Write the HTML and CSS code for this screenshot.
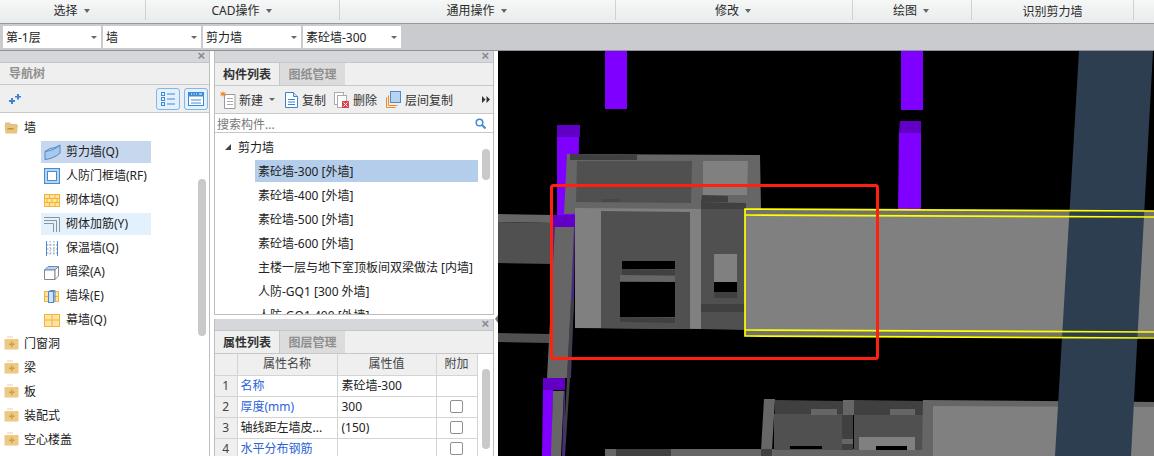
FILE: index.html
```html
<!DOCTYPE html>
<html lang="zh-CN">
<head>
<meta charset="utf-8">
<title>CAD</title>
<link rel="stylesheet" href="styles.css">
</head>
<body>
<svg class="defs" width="0" height="0" aria-hidden="true">
  <symbol id="folder" viewBox="0 0 15 14">
    <path d="M3 0.5h6v1H3z" fill="#e6cfa0"/>
    <path d="M0.5 3h14v10.500h-14z" fill="#edc983"/>
    <path d="M7 5.500h1.500V7.500h2v1.500h-2v2H7V9H5V7.500h2z" fill="#cf9f45"/>
  </symbol>
</svg>

<header class="menubar">
  <div class="menu m1">选择<i class="caret"></i></div>
  <div class="menu m2">CAD操作<i class="caret"></i></div>
  <div class="menu m3">通用操作<i class="caret"></i></div>
  <div class="menu m4">修改<i class="caret"></i></div>
  <div class="menu m5">绘图<i class="caret"></i></div>
  <div class="menu m6 low">识别剪力墙</div>
</header>

<div class="selectbar">
  <div class="select"><span>第-1层</span><i class="caret small"></i></div>
  <div class="select"><span>墙</span><i class="caret small"></i></div>
  <div class="select"><span>剪力墙</span><i class="caret small"></i></div>
  <div class="select"><span>素砼墙-300</span><i class="caret small"></i></div>
</div>

<main class="main">
  <aside class="nav">
    <div class="closebar"><span class="x">×</span></div>
    <div class="navtitle">导航树</div>
    <div class="navtools">
      <svg class="sparkle" width="14" height="12" viewBox="0 0 14 12"><path d="M3 5h2v2h2v2H5v2H3V9H1V7h2zM9 1h2v2h2v1.500h-2v2H9v-2H7V3h2z" fill="#3f83cc"/></svg>
      <span class="spacer"></span>
      <button class="toggle"><svg width="14" height="14" viewBox="0 0 14 14"><g fill="none" stroke="#3f8ad6"><rect x="0.500" y="0.500" width="3" height="3"/><rect x="0.500" y="5.500" width="3" height="3"/><rect x="0.500" y="10.500" width="3" height="3"/><path d="M6 2h8M6 7h8M6 12h8"/></g></svg></button>
      <button class="toggle"><svg width="16" height="14" viewBox="0 0 16 14"><rect x="0.500" y="0.500" width="15" height="13" fill="#fff" stroke="#3f8ad6"/><rect x="0.500" y="0.500" width="15" height="4" fill="#3f8ad6"/><path d="M3 8h10M3 11h10" stroke="#3f8ad6"/><path d="M3 2h1M5.500 2h1M8 2h1M11 2h3" stroke="#fff"/></svg></button>
    </div>
    <div class="tree">
      <div class="group first"><svg class="gicon" width="15" height="13" viewBox="0 0 15 13"><path d="M1 1.500h5l1 1.500h6v2H1z" fill="#d9c499"/><path d="M0.500 4h13.500l-1 8.500H1.500z" fill="#e8c47c"/><path d="M3.500 7h6v1.500h-6z" fill="#bd9442"/></svg>墙</div>
      <div class="leaf sel"><svg width="17" height="16" viewBox="0 0 17 16"><path d="M1 7.500C6 7 12 5 16 1v8C12 13 6 15 1 15.500z" fill="#a9c9ec" stroke="#4a8ad0"/><path d="M1 7.500L6 4.500C10 4 13 3 16 1" fill="none" stroke="#4a8ad0"/></svg><span>剪力墙(Q)</span></div>
      <div class="leaf"><svg width="16" height="16" viewBox="0 0 16 16"><rect x="0.500" y="0.500" width="15" height="15" fill="#b7d3f0" stroke="#4a8ad0"/><rect x="3.500" y="3.500" width="9" height="9" fill="#fff" stroke="#4a8ad0"/></svg><span>人防门框墙(RF)</span></div>
      <div class="leaf"><svg width="16" height="13" viewBox="0 0 16 13"><rect x="0.500" y="0.500" width="15" height="12" fill="#fde3a7" stroke="#f5b52e"/><path d="M0 4.500h16M0 8.500h16M5.500 0v4.500M11 0v4.500M3 4.500v4M8 4.500v4M13 4.500v4M5.500 8.500V13M11 8.500V13" stroke="#f5b52e" fill="none"/></svg><span>砌体墙(Q)</span></div>
      <div class="leaf hov"><svg width="16" height="15" viewBox="0 0 16 15"><path d="M0 .5h15.500V15M0 3.500h12.500V15M0 6.500h9.500V15" fill="none" stroke="#8a949c"/></svg><span>砌体加筋(Y)</span></div>
      <div class="leaf"><svg width="16" height="15" viewBox="0 0 16 15"><path d="M2.500 0v15M13.500 0v15" stroke="#4a8ad0" fill="none"/><path d="M6 0v15M10 0v15M3 4h10M3 8h10M3 12h10" stroke="#8aa0b8" stroke-dasharray="1.500 1.500" fill="none"/></svg><span>保温墙(Q)</span></div>
      <div class="leaf"><svg width="15" height="15" viewBox="0 0 15 15"><path d="M0.500 5L4 1.500h10.500L11 5z" fill="#b7d3f0" stroke="#5a90c8"/><path d="M0.500 5H11v9.500H0.500z" fill="#fff" stroke="#888"/><path d="M11 5l3.500-3.500V11L11 14.500z" fill="#fff" stroke="#888"/></svg><span>暗梁(A)</span></div>
      <div class="leaf"><svg width="15" height="13" viewBox="0 0 15 13"><rect x="0.500" y="1.500" width="14" height="10" fill="#fde3a7" stroke="#f5b52e"/><path d="M0 6.500h15" stroke="#f5b52e"/><rect x="4.500" y="1.500" width="5" height="11" fill="#cfe2f6" stroke="#4a8ad0"/><path d="M4.500 1.500L6.500 .5h4.500v10l-1.500 2" fill="none" stroke="#4a8ad0"/></svg><span>墙垛(E)</span></div>
      <div class="leaf last"><svg width="16" height="13" viewBox="0 0 16 13"><rect x="0.500" y="0.500" width="15" height="12" fill="#fde3a7" stroke="#f5b52e"/><path d="M0 6h16M8 0v13" stroke="#f5b52e" fill="none"/></svg><span>幕墙(Q)</span></div>
      <div class="group"><svg class="gicon" width="15" height="14"><use href="#folder"/></svg>门窗洞</div>
      <div class="group"><svg class="gicon" width="15" height="14"><use href="#folder"/></svg>梁</div>
      <div class="group"><svg class="gicon" width="15" height="14"><use href="#folder"/></svg>板</div>
      <div class="group"><svg class="gicon" width="15" height="14"><use href="#folder"/></svg>装配式</div>
      <div class="group"><svg class="gicon" width="15" height="14"><use href="#folder"/></svg>空心楼盖</div>
      <div class="thumb tree-thumb"></div>
    </div>
  </aside>

  <section class="middle">
    <div class="panel list-panel">
      <div class="closebar"><span class="x">×</span></div>
      <div class="tabs"><div class="tab on">构件列表</div><div class="tab">图纸管理</div></div>
      <div class="tools">
        <svg class="t-new" width="16" height="18" viewBox="0 0 16 18"><path d="M4.500 3.500h10.500v14H4.500z" fill="#fff" stroke="#9a9a9a"/><path d="M7 7.500h6M7 10.500h6M7 13.500h6" stroke="#aaa"/><path d="M3 0l.8 2L6 1 4.800 3 6 5 3.800 4 3 6 2.200 4 0 5l1.200-2L0 1l2.200 1z" fill="#f08a24"/></svg>
        <span class="tl w-new">新建</span><i class="caret small tl-caret"></i>
        <svg class="t-copy" width="13" height="16" viewBox="0 0 13 16"><path d="M.5 .5h8l4 4v11H.5z" fill="#fff" stroke="#3f83cc"/><path d="M8.500 .5v4h4" fill="#cfe2f6" stroke="#3f83cc"/><path d="M3 7.500h7M3 10h7M3 12.500h7" stroke="#3f83cc"/></svg>
        <span class="tl w-copy">复制</span>
        <svg class="t-del" width="15" height="16" viewBox="0 0 15 16"><rect x="0.500" y="0.500" width="9" height="12" fill="#fff" stroke="#aaa"/><rect x="3.500" y="3.500" width="9" height="12" fill="#fff" stroke="#aaa"/><rect x="8" y="9" width="7" height="7" fill="#d9444a"/><path d="M9.500 10.500l4 4M13.500 10.500l-4 4" stroke="#fff"/></svg>
        <span class="tl w-del">删除</span>
        <svg class="t-floor" width="15" height="17" viewBox="0 0 15 17"><path d="M.5 6.500v10h9M2.500 4.500v10h9" fill="none" stroke="#f08a24"/><rect x="4.500" y="0.500" width="10" height="11" fill="#b7d3f0" stroke="#4a8ad0"/></svg>
        <span class="tl w-floor">层间复制</span>
        <svg class="more" width="8" height="7" viewBox="0 0 8 7"><path d="M0 0l3.500 3.500L0 7zM4.500 0L8 3.500 4.500 7z" fill="#333"/></svg>
      </div>
      <div class="search"><span>搜索构件...</span><svg width="11" height="11" viewBox="0 0 11 11"><circle cx="4.500" cy="4.500" r="3.300" fill="none" stroke="#3f8ad6" stroke-width="1.500"/><path d="M7 7l3.500 3.500" stroke="#3f8ad6" stroke-width="2"/></svg></div>
      <div class="list">
        <div class="root"><i class="tri"></i><span>剪力墙</span></div>
        <div class="row on">素砼墙-300 [外墙]</div>
        <div class="row">素砼墙-400 [外墙]</div>
        <div class="row">素砼墙-500 [外墙]</div>
        <div class="row">素砼墙-600 [外墙]</div>
        <div class="row">主楼一层与地下室顶板间双梁做法 [内墙]</div>
        <div class="row">人防-GQ1 [300 外墙]</div>
        <div class="row">人防-GQ1 400 [外墙]</div>
        <div class="thumb list-thumb"></div>
      </div>
    </div>
    <div class="panel prop-panel">
      <div class="closebar"><span class="x">×</span></div>
      <div class="tabs"><div class="tab on">属性列表</div><div class="tab">图层管理</div></div>
      <div class="tablewrap">
        <table class="props">
          <colgroup><col class="c1"><col class="c2"><col class="c3"><col class="c4"></colgroup>
          <thead><tr><th></th><th>属性名称</th><th>属性值</th><th>附加</th></tr></thead>
          <tbody>
            <tr><th>1</th><td class="blue">名称</td><td>素砼墙-300</td><td></td></tr>
            <tr><th>2</th><td class="blue">厚度(mm)</td><td>300</td><td><i class="check"></i></td></tr>
            <tr><th>3</th><td>轴线距左墙皮...</td><td>(150)</td><td><i class="check"></i></td></tr>
            <tr><th>4</th><td class="blue">水平分布钢筋</td><td></td><td><i class="check"></i></td></tr>
          </tbody>
        </table>
        <div class="thumb prop-thumb"></div>
      </div>
    </div>
  </section>

  <div class="viewport">
    <svg class="scene" width="656" height="405" viewBox="498 51 656 405">
      <!-- purple columns -->
      <rect class="p" x="605" y="51" width="22" height="58"/>
      <rect class="p" x="901" y="51" width="22" height="59"/>
      <polygon class="pd" points="900,121 921,121 921,133 899,133"/>
      <polygon class="p" points="899,133 921,133 921,209 898,209"/>
      <polygon class="pd" points="557,125 580,125 580,137 557,137"/>
      <polygon class="p" points="557,137 579,137 578,215 557,215"/>

      <!-- left beams -->
      <polygon class="g6" points="498,214 553,215 553,223 498,222"/>
      <polygon class="g5" points="498,222 553,223 552,264 498,263"/>
      <polygon class="g5" points="498,333 550,334 549,343 498,342"/>

      <!-- slanted column on the left -->
      <polygon class="pd" points="553,215 575,215 575,227 553,227"/>
      <polygon class="pv" points="553,227 575,227 574,300 571,378 565,378 550,300"/>
      <polygon class="g6" points="555,227 574,227 571,300 567,378 547,378"/>
      <polygon class="g3" points="571,300 574,300 570,378 565,456 563,456 567,378"/>
      <polygon class="pd" points="543,378 565,378 565,390 543,390"/>
      <polygon class="p" points="543,390 553,390 552,456 542,456"/>
      <polygon class="g6" points="553,391 564,391 561,456 551,456"/>
      <polygon class="pv" points="564,391 565,391 565,456 562,456"/>

      <!-- upper block -->
      <polygon class="g6" points="567,154 760,155 761,209 564,214"/>
      <polygon class="g3" points="570,154 637,155 637,160 570,160"/>
      <polygon class="g5" points="577,161 692,161 691,203 576,202"/>
      <rect class="g4" x="602" y="199" width="18" height="3"/>
      <polygon class="g8" points="703,161 748,161 747,195 703,195"/>
      <polygon class="g3" points="702,195 728,196 728,202 701,202"/>

      <!-- front -->
      <polygon class="g8" points="575,208 701,209 701,329 575,328"/>
      <polygon class="g5" points="601,211 690,212 690,329 601,328"/>
      <polygon class="k" points="622,261 675,261 675,269 622,269"/>
      <polygon class="g3" points="622,269 675,270 675,275 622,275"/>
      <polygon class="g6" points="620,275 675,276 675,282 620,281"/>
      <polygon class="k" points="620,282 675,282 675,317 620,317"/>
      <polygon class="g3" points="620,317 675,318 675,323 620,322"/>
      <polygon class="g3" points="701,202 746,203 746,209 701,209"/>
      <polygon class="g5" points="701,209 746,209 746,330 701,329"/>
      <rect class="g8" x="714" y="254" width="23" height="28"/>
      <rect class="k" x="714" y="282" width="23" height="10"/>
      <rect class="g3" x="714" y="292" width="23" height="6"/>
      <rect class="g3" x="701" y="304" width="45" height="8"/>

      <!-- lower blocks -->
      <polygon class="g6" points="605,449 923,449 923,456 605,456"/>
      <rect class="g3" x="616" y="449" width="55" height="7"/>
      <polygon class="g6" points="764,399 775,399 772,450 761,450"/>
      <rect class="g3" x="761" y="449" width="11" height="7"/>
      <polygon class="g3" points="775,400 843,401 843,414 775,414"/>
      <rect class="g5" x="774" y="414" width="69" height="36"/>
      <rect class="g6" x="811" y="409" width="26" height="6"/>
      <rect class="k" x="790" y="446" width="32" height="3"/>
      <rect class="g6" x="843" y="400" width="11" height="15"/>
      <rect class="g3" x="842" y="415" width="11" height="35"/>
      <rect class="g6" x="842" y="439" width="11" height="5"/>
      <polygon class="g3" points="854,400 923,401 923,415 854,415"/>
      <rect class="g5" x="854" y="415" width="69" height="35"/>
      <rect class="g6" x="890" y="409" width="25" height="6"/>
      <rect class="g8" x="859" y="437" width="56" height="13"/>
      <rect class="k" x="876" y="446" width="31" height="4"/>
      <polygon class="g6" points="923,400 1154,402 1154,456 922,456"/>
      <polygon class="g8" points="933,406 1154,407 1154,456 933,456"/>

      <!-- long beam -->
      <polygon class="g8" points="745,215 1154,217 1154,332 745,331"/>
      <polygon class="g7" points="745,209 1154,211 1154,217 745,215"/>
      <polygon class="g7" points="745,330 1154,332 1154,337 745,336"/>

      <!-- blue column -->
      <polygon class="b" points="1079,51 1153,51 1131,456 1055,456"/>

      <!-- yellow outline -->
      <g class="y">
        <polyline points="1154,211 745,209 745,336 1154,338"/>
        <polyline points="745,215 1154,217"/>
        <polyline points="745,330 1154,332"/>
      </g>
      <rect class="r" x="551.500" y="185.500" width="326" height="173" rx="2"/>
    </svg>
  </div>
</main>
</body>
</html>
```

FILE: styles.css
```css
* { box-sizing: border-box; }
html, body { margin: 0; padding: 0; }
body {
  width: 1154px;
  height: 456px;
  overflow: hidden;
  background: #fff;
  color: #222;
  font: 12px/16px "Noto Sans", "Noto Sans CJK SC", "Liberation Sans", sans-serif;
  display: flex;
  flex-direction: column;
}
.defs { position: absolute; }
i { display: inline-block; font-style: normal; }

/* top menu */
.menubar {
  height: 24px;
  flex: none;
  display: flex;
  padding-bottom: 3px;
  background: linear-gradient(#f6f7f7, #e8ecec);
  border-bottom: 1px solid #96999b;
}
.menu {
  display: flex;
  align-items: center;
  justify-content: center;
  padding: 1px 2px 0 0;
  border-right: 1px solid #cdd2d2;
  color: #2a2a2a;
}
.m1 { width: 146px; }
.m2 { width: 194px; }
.m3 { width: 276px; }
.m4 { width: 237px; }
.m5 { width: 119px; }
.m6 { width: 162px; }
.low { padding: 4px 0 0; }
.caret {
  width: 0;
  height: 0;
  margin-left: 6px;
  border: 3.5px solid transparent;
  border-top: 4px solid #666;
  border-bottom: 0;
}
.caret.small {
  border-width: 3px 3px 0;
  border-top-color: #666;
  border-left-color: transparent;
  border-right-color: transparent;
}

/* select strip */
.selectbar {
  height: 27px;
  flex: none;
  display: flex;
  gap: 2px;
  padding: 2px 0 0 3px;
  background: #c9cbcf;
  border-bottom: 1px solid #8f9298;
}
.select {
  width: 98px;
  height: 22px;
  padding: 0 4px 0 3px;
  display: flex;
  align-items: center;
  justify-content: space-between;
  background: #fff;
  color: #222;
}
.select span { padding-top: 2px; }

/* main area */
.main {
  flex: 1;
  min-height: 0;
  display: flex;
  background: #fff;
}
.closebar {
  height: 12px;
  flex: none;
  position: relative;
  background: #d6d7db;
  border-bottom: 1px solid #c4c6ca;
}
.x {
  position: absolute;
  right: 4px;
  top: -3px;
  font: bold 13px/16px "Liberation Sans", sans-serif;
  color: #858a90;
}

/* navigation tree */
.nav {
  width: 210px;
  flex: none;
  display: flex;
  flex-direction: column;
  border-right: 1px solid #bdbdbd;
}
.navtitle {
  height: 22px;
  flex: none;
  padding: 3px 0 0 9px;
  background: #efefef;
  border-bottom: 1px solid #c8c8c8;
  color: #8f8f8f;
  font-weight: 700;
}
.navtools {
  height: 28px;
  flex: none;
  display: flex;
  align-items: center;
  gap: 4px;
  padding: 0 1px 0 8px;
  background: #efefef;
  border-bottom: 1px solid #c8c8c8;
}
.spacer { flex: 1; }
.toggle {
  width: 24px;
  height: 22px;
  padding: 0;
  display: flex;
  align-items: center;
  justify-content: center;
  background: #e4f0fb;
  border: 1px solid #7fb6ec;
  border-radius: 3px;
}
.tree {
  flex: 1;
  position: relative;
  padding-top: 2px;
  overflow: hidden;
}
.group {
  height: 24px;
  display: flex;
  align-items: center;
  padding: 2px 0 0 4px;
  color: #1a1a1a;
}
.first { margin-bottom: 2px; }
.gicon { flex: none; margin: -2px 5px 0 0; }
.leaf {
  height: 22px;
  width: 110px;
  margin: 0 0 2px 41px;
  padding-left: 3px;
  display: flex;
  align-items: center;
  white-space: nowrap;
  color: #222;
}
.leaf.last { margin-bottom: 0; }
.leaf svg { flex: none; }
.leaf span { position: absolute; left: 66px; }
.sel { background: #c6d7ee; }
.hov { background: #e3f1fd; }
.thumb {
  position: absolute;
  background: #c9c9c9;
  border-radius: 4px;
  width: 8px;
}
.tree-thumb { left: 198px; top: 66px; height: 157px; }

/* middle column */
.middle {
  width: 280px;
  flex: none;
  margin-left: 4px;
  display: flex;
  flex-direction: column;
  gap: 4px;
}
.panel {
  display: flex;
  flex-direction: column;
  border: solid #bdbdbd;
  border-width: 0 1px 1px 1px;
}
.list-panel { height: 264px; flex: none; }
.prop-panel { flex: 1; min-height: 0; border-bottom: 0; }
.tabs {
  height: 23px;
  flex: none;
  display: flex;
  background: #efefef;
  border-bottom: 1px solid #c8c8c8;
}
.tab {
  width: 65px;
  padding-top: 4px;
  text-align: center;
  background: #dcdcdc;
  color: #8f8f8f;
  font-weight: 700;
}
.tab.on {
  background: #efefef;
  color: #333;
  border-right: 1px solid #c8c8c8;
}
.tools {
  height: 28px;
  flex: none;
  display: flex;
  align-items: center;
  background: #efefef;
  border-bottom: 1px solid #c8c8c8;
  padding-left: 5px;
}
.tools svg { flex: none; }
.tl { color: #333; white-space: nowrap; padding-top: 2px; }
.w-new { margin-left: 3px; }
.tl-caret { margin-left: 6px; margin-right: 10px; }
.w-copy { margin-left: 4px; }
.t-del { margin-left: 8px; }
.w-del { margin-left: 4px; }
.t-floor { margin-left: 9px; }
.w-floor { margin-left: 4px; }
.tools .more { margin-left: auto; margin-right: 3px; }
.search {
  height: 19px;
  flex: none;
  display: flex;
  align-items: center;
  justify-content: space-between;
  padding: 0 7px 0 2px;
  border-bottom: 1px solid #c8c8c8;
  color: #777;
}
.search span { padding-top: 3px; }
.list {
  flex: 1;
  min-height: 0;
  position: relative;
  overflow: hidden;
}
.root {
  height: 27px;
  padding-left: 10px;
  display: flex;
  align-items: center;
  color: #222;
}
.root span { padding-top: 2px; }
.tri {
  width: 0;
  height: 0;
  margin-right: 7px;
  border-style: solid;
  border-width: 0 0 6px 6px;
  border-color: transparent transparent #444 transparent;
}
.row {
  height: 22px;
  width: 223px;
  margin: 0 0 2px 40px;
  padding: 4px 0 0 3px;
  white-space: nowrap;
  color: #222;
}
.row.on { background: #b3cdeb; }
.list-thumb { left: 267px; top: 16px; height: 31px; }

/* property table */
.tablewrap { flex: 1; min-height: 0; position: relative; overflow: hidden; }
.props {
  width: 262px;
  table-layout: fixed;
  border-collapse: collapse;
}
.c1 { width: 22px; }
.c2 { width: 100px; }
.c3 { width: 99px; }
.c4 { width: 41px; }
.props th, .props td {
  height: 21px;
  padding: 0;
  border: 1px solid #d4d4d4;
  font-weight: 400;
  white-space: nowrap;
  overflow: hidden;
}
.props tr > *:first-child { border-left: 0; }
.props thead tr > * { border-top: 0; }
.props th { background: #efefef; color: #444; text-align: center; }
.props td { padding-left: 3px; color: #222; }
.props td + td { padding-left: 4px; }
.props td:last-child { padding: 0; text-align: center; }
.props .blue { color: #2b63d8; }
.check {
  display: block;
  width: 13px;
  height: 13px;
  margin: 0 auto;
  background: #fff;
  border: 1px solid #8f8f8f;
  border-radius: 2px;
}
.prop-thumb { left: 267px; top: 15px; height: 80px; }

/* 3D viewport */
.viewport {
  flex: 1;
  min-width: 0;
  margin-left: 4px;
  background: #000;
  position: relative;
}
.viewport::before {
  content: "";
  position: absolute;
  left: -3px;
  top: 264px;
  border-style: solid;
  border-width: 4px 3px 4px 0;
  border-color: transparent #777 transparent transparent;
}
.scene { display: block; }
.p { fill: #8000ff; }
.pd { fill: #6100c4; }
.pv { fill: #4a2a80; }
.g8 { fill: #808080; }
.g7 { fill: #72726a; }
.g6 { fill: #666; }
.g5 { fill: #505050; }
.g4 { fill: #484848; }
.g3 { fill: #404040; }
.k { fill: #000; }
.b { fill: #2c3e50; }
.y { fill: none; stroke: #ff0; stroke-width: 1.700; }
.r { fill: none; stroke: #ff2010; stroke-width: 3; }
```
